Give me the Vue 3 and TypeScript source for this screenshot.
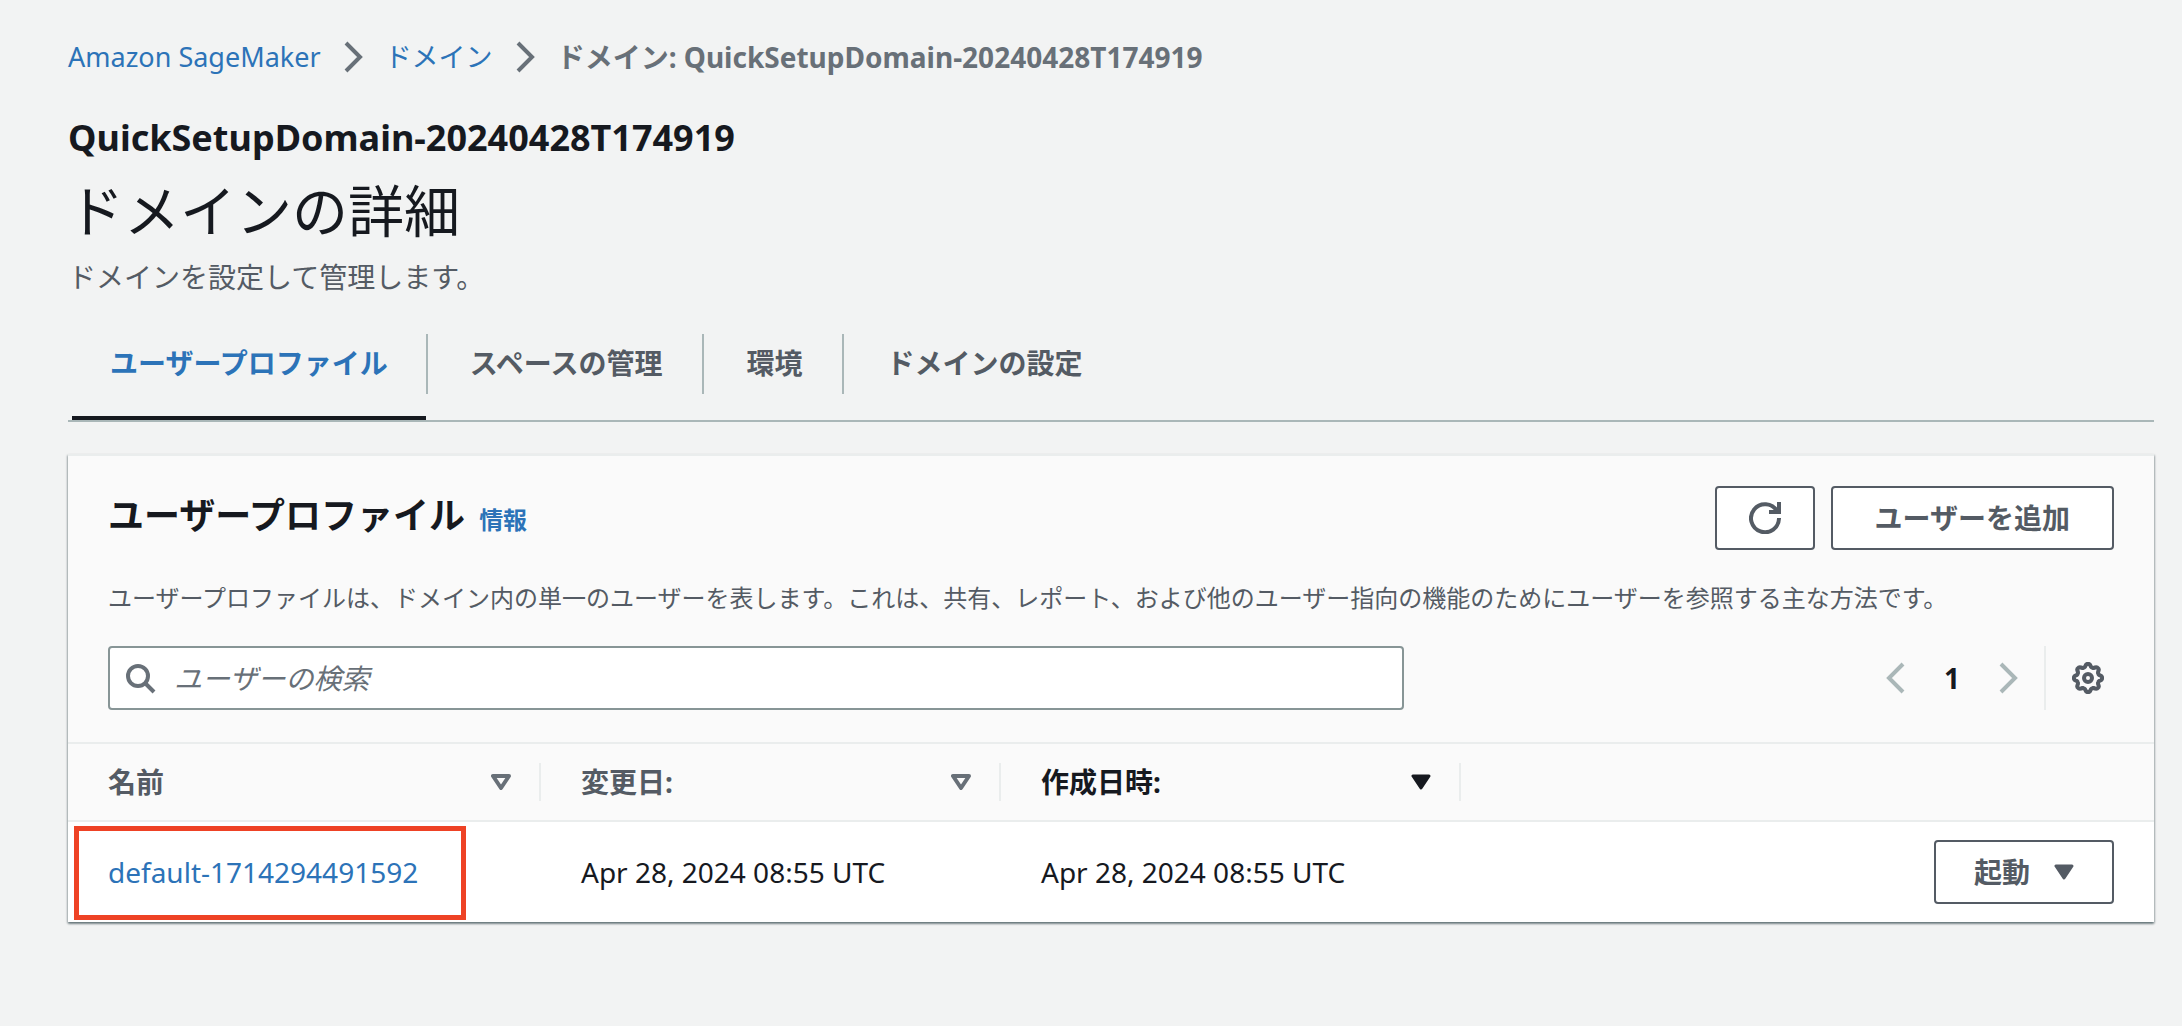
<script setup lang="ts">
import { ref } from 'vue'

interface Column {
  label: string
  active: boolean
}

interface Profile {
  name: string
  modified: string
  created: string
}

const domain = 'QuickSetupDomain-20240428T174919'
const tabs: string[] = ['ユーザープロファイル', 'スペースの管理', '環境', 'ドメインの設定']
const activeTab = ref(0)
const query = ref('')

const columns: Column[] = [
  { label: '名前', active: false },
  { label: '変更日:', active: false },
  { label: '作成日時:', active: true },
]

const profiles: Profile[] = [
  {
    name: 'default-1714294491592',
    modified: 'Apr 28, 2024 08:55 UTC',
    created: 'Apr 28, 2024 08:55 UTC',
  },
]

// Eight-lobed outline of the settings gear
const gearPath = (() => {
  const points: string[] = []
  for (let i = 0; i < 96; i++) {
    const angle = (i / 96) * Math.PI * 2
    const wave = Math.max(-0.7, Math.min(0.7, Math.cos(angle * 8)))
    const radius = 12.6 + wave * 2
    points.push(`${(16 + radius * Math.sin(angle)).toFixed(2)} ${(16 - radius * Math.cos(angle)).toFixed(2)}`)
  }
  return `M${points.join('L')}Z`
})()
</script>

<template>
  <div class="page">
    <nav class="breadcrumb" aria-label="パンくずリスト">
      <a href="#">Amazon SageMaker</a>
      <svg class="icon" viewBox="0 0 32 32" aria-hidden="true"><path d="M9 2l14 14L9 30" /></svg>
      <a href="#">ドメイン</a>
      <svg class="icon" viewBox="0 0 32 32" aria-hidden="true"><path d="M9 2l14 14L9 30" /></svg>
      <span class="current">ドメイン: {{ domain }}</span>
    </nav>

    <header>
      <h2 class="domain-name">{{ domain }}</h2>
      <h1 class="title">ドメインの詳細</h1>
      <p class="subtitle">ドメインを設定して管理します。</p>
    </header>

    <div class="tabs" role="tablist">
      <button
        v-for="(tab, i) in tabs"
        :key="tab"
        type="button"
        role="tab"
        class="tab"
        :class="{ active: i === activeTab }"
        :aria-selected="i === activeTab"
        @click="activeTab = i"
      >
        <span>{{ tab }}</span>
      </button>
    </div>

    <section class="card">
      <div class="card-header">
        <div class="title-row">
          <div class="card-title">
            <h2>ユーザープロファイル</h2>
            <a href="#">情報</a>
          </div>
          <div class="actions">
            <button type="button" class="button refresh" aria-label="更新">
              <svg class="icon" viewBox="0 0 32 32" aria-hidden="true">
                <path d="M30 16A14 14 0 1 1 28 9" />
                <path d="M30 0v10H20" />
              </svg>
            </button>
            <button type="button" class="button">ユーザーを追加</button>
          </div>
        </div>
        <p class="description">
          ユーザープロファイルは、ドメイン内の単一のユーザーを表します。これは、共有、レポート、および他のユーザー指向の機能のためにユーザーを参照する主な方法です。
        </p>
        <div class="tools">
          <label class="search">
            <svg class="icon" viewBox="0 0 32 32" aria-hidden="true">
              <circle cx="12" cy="14" r="10" />
              <path d="M19 21l9 9" />
            </svg>
            <input v-model="query" type="text" placeholder="ユーザーの検索" aria-label="ユーザーの検索" />
          </label>
          <div class="pagination">
            <button type="button" class="bare" aria-label="前のページ" disabled>
              <svg class="icon" viewBox="0 0 32 32" aria-hidden="true"><path d="M23 2L9 16l14 14" /></svg>
            </button>
            <button type="button" class="bare page-number">1</button>
            <button type="button" class="bare" aria-label="次のページ" disabled>
              <svg class="icon" viewBox="0 0 32 32" aria-hidden="true"><path d="M9 2l14 14L9 30" /></svg>
            </button>
          </div>
          <div class="preferences">
            <button type="button" class="bare" aria-label="設定">
              <svg class="icon" viewBox="0 0 32 32" aria-hidden="true">
                <path :d="gearPath" />
                <circle cx="16" cy="16" r="4" />
              </svg>
            </button>
          </div>
        </div>
      </div>

      <table>
        <colgroup>
          <col class="col-name" />
          <col class="col-date" />
          <col class="col-date" />
          <col />
        </colgroup>
        <thead>
          <tr>
            <th v-for="column in columns" :key="column.label" scope="col" :class="{ sorted: column.active }">
              <div class="th-content">
                <span>{{ column.label }}</span>
                <svg class="sort" viewBox="0 0 20 16" aria-hidden="true">
                  <path v-if="column.active" d="M2 2H18L10 14Z" />
                  <path v-else class="hollow" d="M2 2H18L10 14Z" />
                </svg>
              </div>
            </th>
            <td></td>
          </tr>
        </thead>
        <tbody>
          <tr v-for="profile in profiles" :key="profile.name">
            <td class="marked"><a href="#">{{ profile.name }}</a></td>
            <td>{{ profile.modified }}</td>
            <td>{{ profile.created }}</td>
            <td>
              <button type="button" class="button launch" aria-haspopup="menu">
                起動
                <svg class="sort" viewBox="0 0 20 16" aria-hidden="true"><path d="M2 2H18L10 14Z" /></svg>
              </button>
            </td>
          </tr>
        </tbody>
      </table>
    </section>
  </div>
</template>

<style>
body {
  margin: 0;
  background: #f2f3f3;
}
</style>

<style scoped>
.page {
  box-sizing: border-box;
  min-height: 100vh;
  padding: 35px 28px 32px 68px;
  font-family: "Noto Sans", "Noto Sans CJK JP", sans-serif;
  font-size: 28px;
  line-height: 44px;
  color: #16191f;
  background: #f2f3f3;
}

h1,
h2,
p {
  margin: 0;
}

a {
  color: #2c73b8;
  text-decoration: none;
}

button {
  font: inherit;
  color: inherit;
  cursor: pointer;
}

.icon {
  display: block;
  flex: none;
  width: 32px;
  height: 32px;
  fill: none;
  stroke: currentColor;
  stroke-width: 4;
}

.breadcrumb {
  display: flex;
  align-items: center;
  gap: 16px;
  height: 44px;
  color: #687078;
}

.breadcrumb a {
  font-size: 27px;
}

.current {
  font-weight: 700;
}

.domain-name {
  height: 48px;
  margin-top: 35px;
  font-size: 36px;
  line-height: 48px;
}

.title {
  height: 72px;
  margin-top: 12px;
  font-size: 56px;
  font-weight: 400;
  line-height: 72px;
}

.subtitle {
  height: 40px;
  margin-top: 11px;
  line-height: 40px;
  color: #545b64;
}

.tabs {
  display: flex;
  margin-top: 37px;
  border-bottom: 2px solid #aab7b8;
}

.tab {
  display: flex;
  box-sizing: border-box;
  height: 86px;
  padding: 0;
  border: 0;
  border-bottom: 4px solid transparent;
  background: none;
  font-weight: 700;
  color: #545b64;
}

.tab span {
  height: 60px;
  padding: 0 40px 0 42px;
  border-left: 2px solid #aab7b8;
  line-height: 58px;
}

.tab:first-child {
  margin-left: 4px;
}

.tab:first-child span {
  padding: 0 38px;
  border-left: 0;
}

.tab.active {
  border-bottom-color: #16191f;
  color: #2c73b8;
}

.card {
  margin-top: 32px;
  border-top: 2px solid #eaeded;
  background: #fff;
  box-shadow: 0 2px 2px 0 rgba(0, 28, 36, 0.4), 1px 1px 2px 0 rgba(0, 28, 36, 0.2),
    -1px 1px 2px 0 rgba(0, 28, 36, 0.2);
}

.card-header {
  padding: 30px 40px 32px;
  background: #fafafa;
}

.title-row,
.actions,
.tools,
.pagination {
  display: flex;
  align-items: center;
}

.title-row {
  justify-content: space-between;
}

.card-title {
  display: flex;
  align-items: baseline;
  gap: 14px;
}

.card-title h2 {
  font-size: 36px;
}

.card-title a {
  font-size: 24px;
  font-weight: 700;
}

.actions {
  gap: 16px;
}

.button {
  display: flex;
  align-items: center;
  justify-content: center;
  box-sizing: border-box;
  height: 64px;
  padding: 0 42px;
  border: 2px solid #545b64;
  border-radius: 4px;
  background: #fff;
  font-weight: 700;
  color: #545b64;
}

.refresh {
  padding: 0 32px;
}

.description {
  margin-top: 30px;
  font-size: 24px;
  line-height: 36px;
  color: #545b64;
}

.tools {
  margin-top: 30px;
}

.search {
  display: flex;
  align-items: center;
  gap: 16px;
  flex: 0 1 1296px;
  box-sizing: border-box;
  height: 64px;
  padding: 0 16px;
  border: 2px solid #879596;
  border-radius: 4px;
  background: #fff;
  color: #687078;
}

.search input {
  flex: 1;
  min-width: 0;
  padding: 0;
  border: 0;
  outline: 0;
  background: none;
  font: inherit;
  color: #16191f;
}

.search input::placeholder {
  font-style: italic;
  color: #687078;
  opacity: 1;
}

.pagination {
  gap: 24px;
  margin-left: auto;
  padding-right: 20px;
  color: #aab7b8;
}

.bare {
  padding: 0;
  border: 0;
  background: none;
}

.bare:disabled {
  color: #aab7b8;
}

.page-number {
  width: 32px;
  font-weight: 700;
  color: #16191f;
}

.preferences {
  display: flex;
  align-items: center;
  height: 64px;
  padding: 0 10px 0 26px;
  border-left: 2px solid #eaeded;
  color: #545b64;
}

table {
  width: 100%;
  border-collapse: separate;
  border-spacing: 0;
  table-layout: fixed;
}

.col-name {
  width: 473px;
}

.col-date {
  width: 460px;
}

thead th,
thead td {
  height: 76px;
  padding: 0;
  border-top: 2px solid #eaeded;
  border-bottom: 2px solid #eaeded;
  background: #fafafa;
  text-align: left;
  color: #545b64;
}

.th-content {
  display: flex;
  align-items: center;
  justify-content: space-between;
  height: 38px;
  padding: 0 28px 0 40px;
  border-right: 2px solid #eaeded;
}

.sort {
  width: 20px;
  height: 16px;
  fill: currentColor;
  stroke: currentColor;
  stroke-width: 3;
  stroke-linejoin: round;
}

.hollow {
  fill: none;
  stroke: #687078;
  stroke-width: 4;
}

thead th.sorted {
  color: #16191f;
}

tbody td {
  padding: 18px 40px;
}

.marked {
  position: relative;
}

.marked::after {
  content: "";
  position: absolute;
  inset: 4px 75px 2px 6px;
  border: 5px solid #ee4225;
  pointer-events: none;
}

.launch {
  gap: 24px;
  margin-left: auto;
  padding: 0 38px;
}
</style>
